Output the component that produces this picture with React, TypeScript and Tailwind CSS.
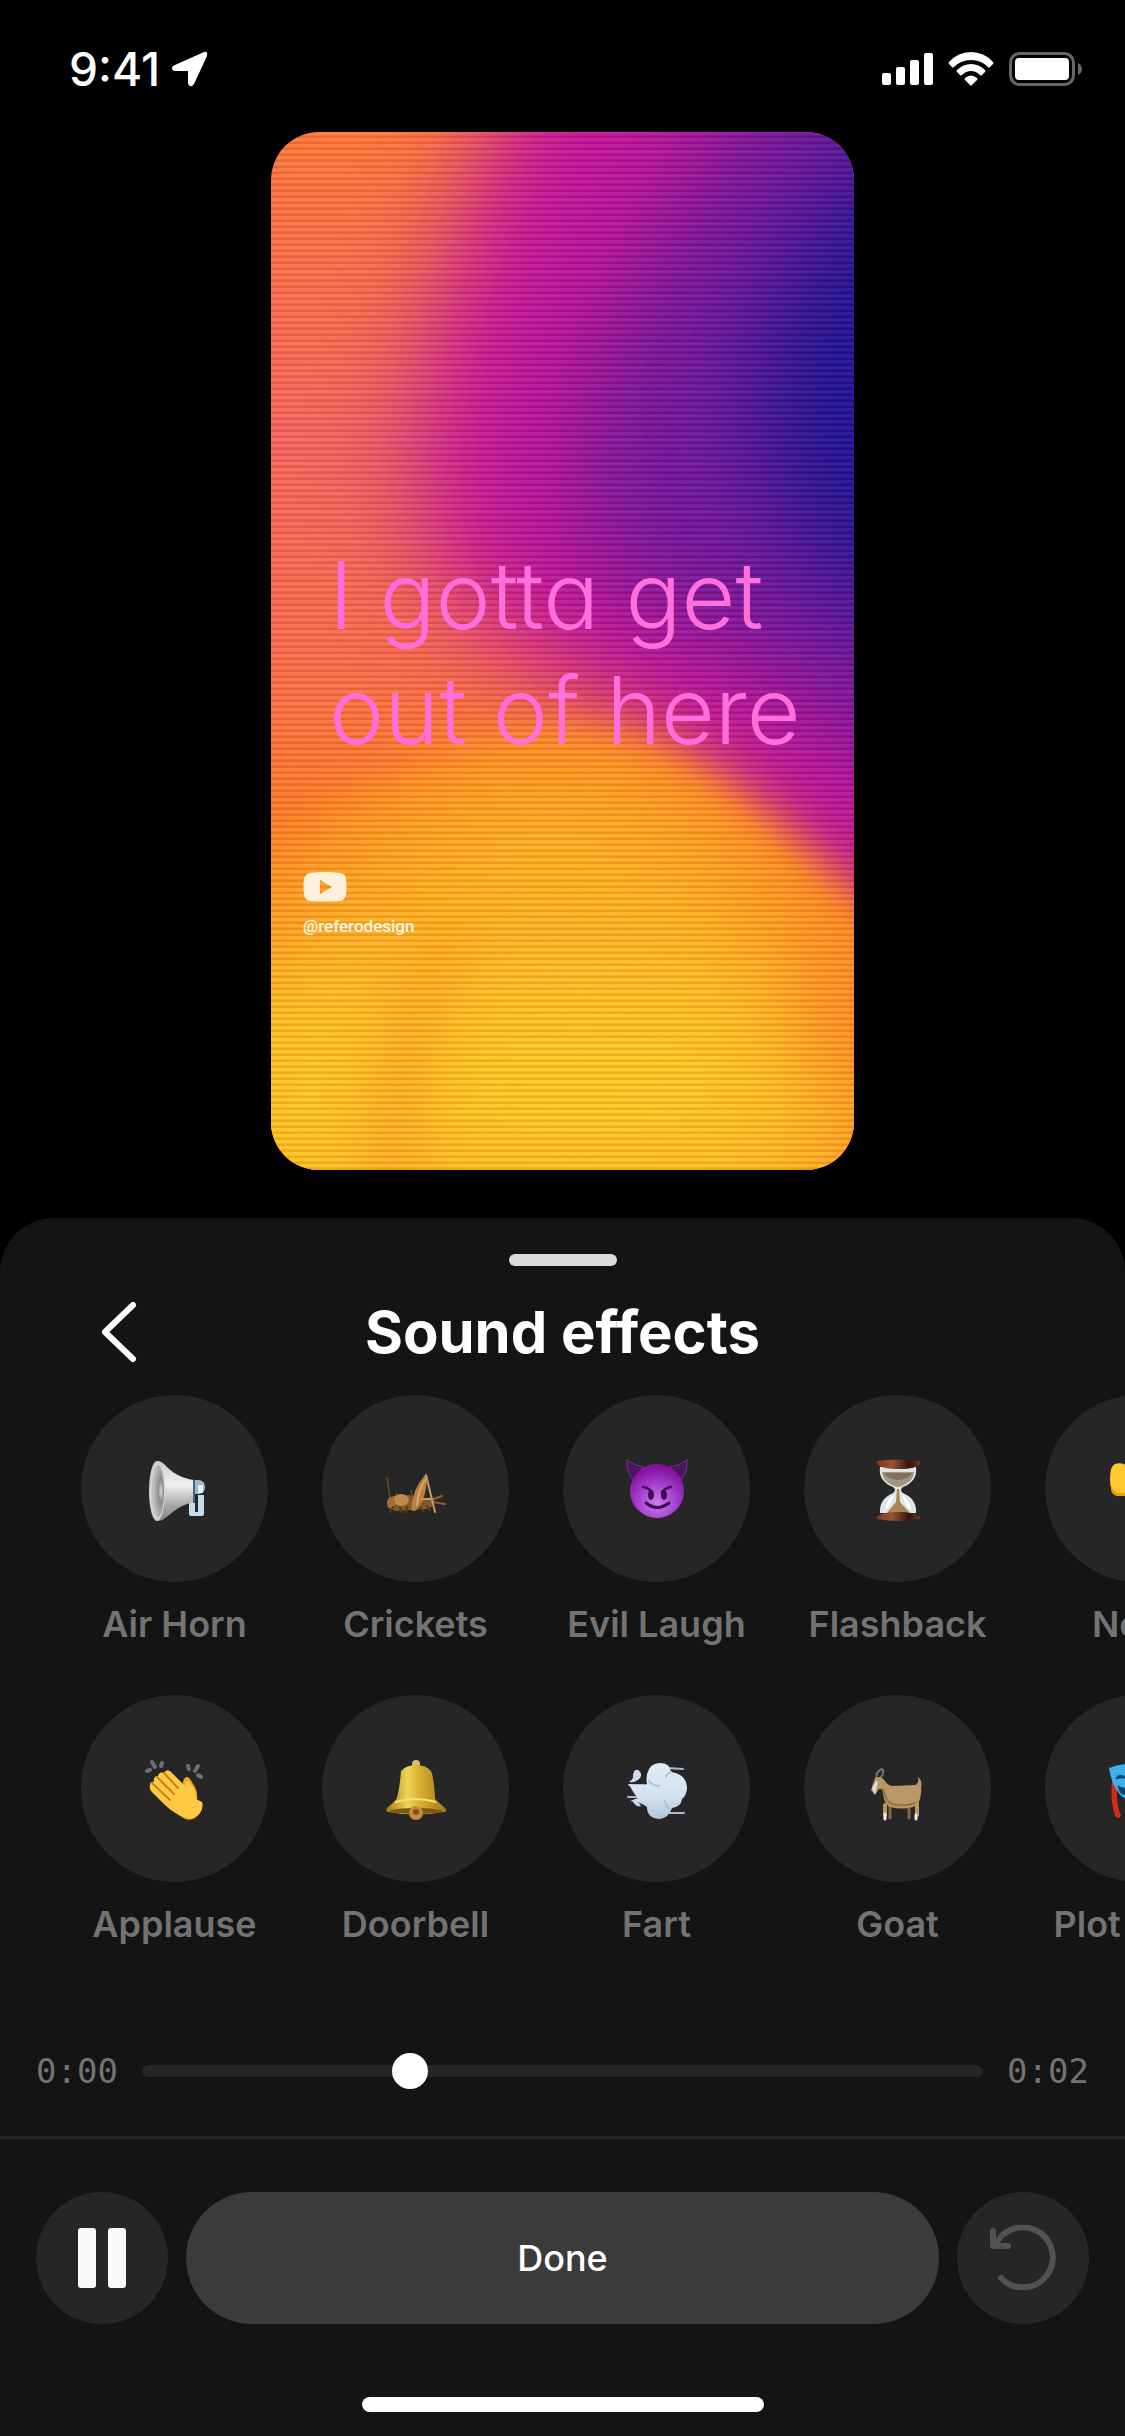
import { useState } from 'react'
import type { ReactNode } from 'react'

interface Sound {
  name: string
  icon: ReactNode
}

function AirHorn() {
  return (
    <svg viewBox="0 0 64 64" className="size-16" aria-hidden="true">
      <defs>
        <linearGradient id="hornBody" x1="0" y1="0" x2="0" y2="1">
          <stop offset="0" stopColor="#c9c9c9" />
          <stop offset="0.4" stopColor="#f1f1f1" />
          <stop offset="0.75" stopColor="#a5a5a5" />
          <stop offset="1" stopColor="#858585" />
        </linearGradient>
        <radialGradient id="hornMouth" cx="0.75" cy="0.5" r="0.6">
          <stop offset="0" stopColor="#d8d8d8" />
          <stop offset="0.35" stopColor="#8e8e8e" />
          <stop offset="1" stopColor="#bdbdbd" />
        </radialGradient>
      </defs>
      <path d="M46 40h6v15h3V38h6v19q0 2-2 2H48q-2 0-2-2z" fill="#c5dcec" />
      <path d="M51 23h5q6 1 6 7t-6 7h-5z" fill="#9db9cc" />
      <path d="M55 28h5v8h-5z" fill="#e6f2fa" />
      <path d="M15 4c8 0 10 15 36 19v22C29 50 24 64 15 64z" fill="url(#hornBody)" />
      <ellipse cx="14" cy="34" rx="8" ry="30" fill="#d2d2d2" />
      <ellipse cx="15" cy="34" rx="6" ry="26" fill="url(#hornMouth)" />
      <path d="M50 23h2v23h-2z" fill="#44637c" />
    </svg>
  )
}

function Cricket() {
  return (
    <svg viewBox="0 0 64 64" className="size-16" fill="none" strokeLinecap="round" aria-hidden="true">
      <path d="M3 21q2 10 3 21M12 36l3 8M27 34l2 10" stroke="#6b4a26" strokeWidth="1.5" />
      <path d="M33 44q14 0 28 3M42 45l16-6" stroke="#8a6235" strokeWidth="2" />
      <path d="M4 42q4-4 9-3l13-1 22 6q4 6-6 8l-30 2q-8-2-8-12z" fill="#81572b" />
      <ellipse cx="17" cy="43" rx="8" ry="6" fill="#c08a4c" />
      <ellipse cx="7" cy="46" rx="4" ry="6" fill="#a06f38" />
      <path d="M27 53q1-20 14-35 4 1 2 6-2 22-12 30z" fill="#b98141" />
      <path d="M33 48q1-14 8-25" stroke="#d9a868" strokeWidth="2" />
      <path d="M42 18l9 37M38 42h10" stroke="#c99a5d" strokeWidth="2" />
      <path d="M9 50l-3 5M16 50l1 5M23 50l-1 5M36 50l4 5M43 49l3 4" stroke="#5c3d1c" strokeWidth="2" />
    </svg>
  )
}

function Devil() {
  return (
    <svg viewBox="0 0 64 64" className="size-16" fill="none" strokeLinecap="round" aria-hidden="true">
      <defs>
        <radialGradient id="devilFace" cx="0.5" cy="0.72" r="0.65">
          <stop offset="0" stopColor="#cf7bea" />
          <stop offset="0.55" stopColor="#a53fd0" />
          <stop offset="1" stopColor="#86109f" />
        </radialGradient>
      </defs>
      <path d="M2 3q8 6 17 7L8 23Q1 15 2 3zM62 3q-8 6-17 7l11 13q7-8 6-20z" fill="#4d1462" stroke="#77308c" strokeWidth="1" />
      <circle cx="32" cy="34" r="27" fill="url(#devilFace)" />
      <path d="M18 30q4 0 9 5M46 30q-4 0-9 5" stroke="#3d0a55" strokeWidth="2.5" />
      <ellipse cx="26" cy="38" rx="3" ry="5" fill="#3d0a55" />
      <ellipse cx="39" cy="38" rx="3" ry="5" fill="#3d0a55" />
      <path d="M21 46q11 9 23 0" stroke="#3d0a55" strokeWidth="3" />
    </svg>
  )
}

function Hourglass() {
  return (
    <svg viewBox="0 0 64 64" className="size-16" aria-hidden="true">
      <defs>
        <linearGradient id="wood" x1="0" y1="0" x2="1" y2="0">
          <stop offset="0" stopColor="#7c3c20" />
          <stop offset="0.35" stopColor="#9a5332" />
          <stop offset="0.75" stopColor="#32130b" />
          <stop offset="1" stopColor="#75371f" />
        </linearGradient>
      </defs>
      <path d="M14 10h36q2 14-13 20-4 3 0 6 14 6 13 20H14q-1-14 13-20 4-3 0-6Q12 24 14 10z" fill="#dde5ea" />
      <path d="M16 15h32q0 9-12 14-4 2-8 0-12-5-12-14z" fill="#a69380" />
      <path d="M18 16h28q-3 6-14 7-11-1-14-7z" fill="#83705c" />
      <path d="M31 32h2l1 13 10 11H21l9-11z" fill="#a98553" />
      <path d="M19 54q0-10 9-16-3 10-9 16zM45 54q0-10-9-16 3 10 9 16z" fill="#fff" />
      <path d="M11 4q21-3 43 0v3q-3 5-21 5T11 7z" fill="url(#wood)" />
      <path d="M11 60q4-5 21-5t22 5v2q-21 4-43 0z" fill="url(#wood)" />
    </svg>
  )
}

function ThumbsDown() {
  return (
    <svg viewBox="0 0 64 64" className="size-16" aria-hidden="true">
      <path
        d="M8 7q6-2 13 2l20-3q8-1 9 5 6 3 3 9 5 4 1 9 2 6-5 8-5 2-13 1 2 8 1 17-1 7-6 6-4 0-5-8-2-8-8-17H9q-6-1-6-14T8 7z"
        fill="#ffc92e"
      />
      <path d="M4 28q2 6 7 8h8l2 3H10q-7-1-6-11z" fill="#e99f15" />
    </svg>
  )
}

function Clap() {
  return (
    <svg viewBox="0 0 64 64" className="size-16" fill="none" strokeLinecap="round" strokeLinejoin="round" aria-hidden="true">
      <path d="M4 14l3-1M9 5l3 5M19 6l-1 3M45 9l1 3M55 9l-3 5M58 20l-3-2" stroke="#66717a" strokeWidth="4" />
      <path d="M39 28l2-6q3-4 6 0l5 8q3 6 2 13l4 3q3 4-1 10l-5 5q-5 3-10 1l-8-5z" fill="#eda91f" />
      <path
        d="M7 28q0-4 4-3-1-6 4-6 1-5 6-3 3-5 7-1l14 14q0-6 3-5 8 8 8 18l6 3q2 5-3 12-6 6-12 4-13-4-22-13L8 34q-2-3-1-6z"
        fill="#ffca42"
      />
      <path d="M9 26l18 17M14 20l17 17M21 16l14 15" stroke="#c9811a" strokeWidth="2" />
    </svg>
  )
}

function Bell() {
  return (
    <svg viewBox="0 0 64 64" className="size-16" aria-hidden="true">
      <defs>
        <linearGradient id="brass" x1="0" y1="0" x2="1" y2="0">
          <stop offset="0" stopColor="#a87b14" />
          <stop offset="0.35" stopColor="#f0d356" />
          <stop offset="0.6" stopColor="#d3aa2c" />
          <stop offset="1" stopColor="#a8771a" />
        </linearGradient>
      </defs>
      <circle cx="32" cy="7" r="4" fill="#d8bd76" />
      <path d="M17 14q5-6 15-6t15 6q3 6 4 28l11 10q1 4-3 3-27 5-54 0-4 0-2-4l9-8q3-6 5-29z" fill="url(#brass)" />
      <ellipse cx="32" cy="54" rx="26" ry="3" fill="#7d5a10" />
      <path d="M11 45q21-6 41 0" fill="none" stroke="#f3df7d" strokeWidth="2" />
      <circle cx="32" cy="56" r="7" fill="#c48a43" />
      <circle cx="32" cy="55" r="3" fill="#8e4c22" />
    </svg>
  )
}

function Puff() {
  return (
    <svg viewBox="0 0 64 64" className="size-16" aria-hidden="true">
      <defs>
        <linearGradient id="cloud" x1="0" y1="0" x2="0" y2="1">
          <stop offset="0" stopColor="#e2ecf7" />
          <stop offset="0.6" stopColor="#d3e1f0" />
          <stop offset="1" stopColor="#b3c6dc" />
        </linearGradient>
      </defs>
      <path d="M42 11l16 1M42 56h17M3 40h14M4 28h14" stroke="#a9bace" strokeWidth="2" strokeLinecap="round" />
      <path
        d="M4 27q10 2 18 0-1-4 0-10 3-11 13-11t11 9q15 2 16 15 0 8-5 12-1 8-10 9-4 11-13 11-12-1-12-12-6-5-17-6l8-3q-5-5-9-14z"
        fill="url(#cloud)"
      />
      <path d="M24 24q4 5 10 5M44 52q-3-3-4-8M46 15q-4 1-5 5" stroke="#aec2d8" strokeWidth="2" fill="none" strokeLinecap="round" />
      <path d="M4 25q5-3 4-7 1-6 5-5 5 3 2 8-4 5-11 4zM7 43q6 0 9 6-5 2-9-6z" fill="#cfdbe8" />
    </svg>
  )
}

function Goat() {
  return (
    <svg viewBox="0 0 64 64" className="size-16" fill="none" strokeLinecap="round" aria-hidden="true">
      <path d="M24 46v15M43 46v15" stroke="#80664a" strokeWidth="3" />
      <path d="M10 22q0-8 6-10M13 22q5-4 4-9" stroke="#7d7164" strokeWidth="2" />
      <path
        d="M9 21q6-3 10 3 3 5 8 5l22-1q4-1 3-8 5 4 3 11 1 8-3 16l-5 3q-11 3-23 0-6-3-7-14-1-5-4-4l-4 6-4-5z"
        fill="#b99767"
      />
      <path d="M17 32q3 13 9 15 13 3 23-1" stroke="#92734a" strokeWidth="2" />
      <path d="M7 29l3-5 2 1-3 12-3-5z" fill="#e4dccd" />
      <path d="M19 48v10M51 46v12" stroke="#b99767" strokeWidth="4" />
      <path d="M19 57v5M50 58v4" stroke="#f1eadf" strokeWidth="3" />
    </svg>
  )
}

function Masks() {
  return (
    <svg viewBox="0 0 64 64" className="size-16" aria-hidden="true">
      <path d="M5 23q6 1 5 12t4 24q-3 4-6 0-5-16-3-36z" fill="#d52a16" />
      <path d="M2 11q16-6 34-4 3 28-14 37Q6 37 2 11z" fill="#40aee8" />
      <path d="M9 22q4-6 9-1M12 30q6 4 13-1-2 9-7 8t-6-7z" stroke="#10466f" strokeWidth="2" fill="#153c5d" />
      <path d="M27 23q17-3 34 4-3 25-18 34-16-10-16-38z" fill="#d65db1" />
    </svg>
  )
}

const sounds: Sound[] = [
  { name: 'Air Horn', icon: <AirHorn /> },
  { name: 'Applause', icon: <Clap /> },
  { name: 'Crickets', icon: <Cricket /> },
  { name: 'Doorbell', icon: <Bell /> },
  { name: 'Evil Laugh', icon: <Devil /> },
  { name: 'Fart', icon: <Puff /> },
  { name: 'Flashback', icon: <Hourglass /> },
  { name: 'Goat', icon: <Goat /> },
  { name: 'Nope', icon: <ThumbsDown /> },
  { name: 'Plot Twist', icon: <Masks /> },
]

function StatusBar() {
  return (
    <header className="flex h-[132px] items-start justify-between pt-[42px] pr-[42px] pl-[69px] text-white">
      <div className="flex items-center gap-3">
        <span className="text-[46px] leading-[54px] font-medium">9:41</span>
        <svg viewBox="0 0 36 36" className="size-9" aria-label="Location">
          <path d="M32 1q4-1 3 4L22 33q-2 3-4 2t-2-3V20H3q-3 0-3-3 0-2 3-3z" fill="currentColor" />
        </svg>
      </div>
      <div className="flex items-center gap-[15px] pt-[10px]">
        <svg viewBox="0 0 51 34" className="h-[34px] w-[51px]" fill="currentColor" aria-label="Signal">
          <rect x="0" y="21" width="9" height="12" rx="2" />
          <rect x="14" y="15" width="9" height="18" rx="2" />
          <rect x="28" y="8" width="9" height="25" rx="2" />
          <rect x="42" y="1" width="9" height="32" rx="2" />
        </svg>
        <svg viewBox="0 0 46 34" className="h-[34px] w-[46px]" fill="currentColor" aria-label="Wi-Fi">
          <path d="M1 10Q10 0 23 0t22 10q1 1 0 2l-3 3q-1 1-2 0-7-7-17-7T6 15q-1 1-2 0l-3-3q-1-1 0-2z" />
          <path d="M9 18q6-6 14-6t14 6q1 1 0 2l-3 3q-1 1-2 0-4-4-9-4t-9 4q-1 1-2 0l-3-3q-1-1 0-2z" />
          <path d="M17 26q6-5 12 0 1 1 0 2l-5 5q-1 1-2 0l-5-5q-1-1 0-2z" />
        </svg>
        <svg viewBox="0 0 74 34" className="h-[34px] w-[74px]" aria-label="Battery">
          <rect x="1.5" y="1.5" width="63" height="31" rx="9" fill="none" stroke="#666" strokeWidth="3" />
          <rect x="6" y="6" width="54" height="22" rx="4" fill="#fff" />
          <path d="M69 11q4 2 4 6t-4 6z" fill="#666" />
        </svg>
      </div>
    </header>
  )
}

function Backdrop() {
  return (
    <svg viewBox="0 0 583 1038" preserveAspectRatio="none" className="absolute inset-0 size-full" aria-hidden="true">
      <defs>
        <linearGradient id="coral" x1="0" y1="0" x2="0" y2="1">
          <stop offset="0" stopColor="#ff7636" />
          <stop offset="0.3" stopColor="#f4645a" />
          <stop offset="0.5" stopColor="#fa6a4a" />
          <stop offset="0.65" stopColor="#ff7a26" />
          <stop offset="1" stopColor="#ff9a1e" />
        </linearGradient>
        <filter id="soft" x="-400" y="-400" width="1500" height="1900" filterUnits="userSpaceOnUse" colorInterpolationFilters="sRGB">
          <feGaussianBlur stdDeviation="50" />
        </filter>
        <filter id="crisp" x="-400" y="-400" width="1500" height="1900" filterUnits="userSpaceOnUse" colorInterpolationFilters="sRGB">
          <feGaussianBlur stdDeviation="20" />
        </filter>
      </defs>
      <rect width="583" height="1038" fill="url(#coral)" />
      <path d="M280-200C210 40 160 160 150 310s60 180 130 230 170 100 350 320h300V-200z" fill="#c0109a" filter="url(#soft)" />
      <path d="M540-200C430 60 320 160 310 310s60 170 130 200 90 60 200 160h300V-200z" fill="#6c149a" filter="url(#soft)" />
      <path d="M700-80C580 40 490 130 490 260s70 200 180 270z" fill="#150f92" filter="url(#soft)" />
      <path d="M-150 860C0 700 160 605 290 600s190 75 420 290v400h-860z" fill="#ff8f1c" filter="url(#crisp)" />
      <path d="M-150 960C20 770 160 660 270 655s190 60 310 250v400h-730z" fill="#ffb31f" filter="url(#soft)" />
      <ellipse cx="310" cy="950" rx="240" ry="110" fill="#ffc81e" filter="url(#soft)" />
      <ellipse cx="40" cy="960" rx="90" ry="110" fill="#ffc81e" filter="url(#soft)" />
      <path d="M170 780q-80 90-80 290h60q0-150 60-290z" fill="#ffa41c" fillOpacity="0.6" filter="url(#crisp)" />
      <ellipse cx="590" cy="880" rx="50" ry="70" fill="#ff8420" filter="url(#soft)" />
    </svg>
  )
}

function VideoPreview() {
  return (
    <section
      aria-label="Video preview"
      className="relative mx-auto aspect-[583/1038] w-[583px] max-w-full overflow-hidden rounded-[48px]"
    >
      <Backdrop />
      <div className="absolute inset-0 bg-[repeating-linear-gradient(to_bottom,rgba(255,255,255,0.07)_0px,rgba(255,255,255,0.07)_3px,rgba(110,0,10,0.12)_4px,rgba(110,0,10,0.12)_6px)]" />
      <div className="relative flex flex-col items-start pt-[406px] pl-[58px]">
        <p className="text-[93px] leading-[115px] font-light whitespace-nowrap text-[#ff70dc] [font-feature-settings:'cv11']">
          I gotta get
          <br />
          out of here
        </p>
      </div>
      <div className="relative flex flex-col items-start gap-3 pt-[104px] pl-8 text-white/90">
        <svg viewBox="0 0 44 30" className="h-[30px] w-11" aria-label="YouTube">
          <path
            fillRule="evenodd"
            d="M7 1q15-2 30 0 6 1 6 6 1 8 0 16-1 5-6 6-15 1-30 0-5-1-6-6-1-8 0-16 1-5 6-6zM17 8v14l12-7z"
            fill="#fff0dc"
          />
        </svg>
        <span className="font-[Roboto,sans-serif] text-[17px] leading-6 font-medium">@referodesign</span>
      </div>
    </section>
  )
}

function SoundButton({ sound }: { sound: Sound }) {
  return (
    <button type="button" className="flex flex-col items-center gap-[18px]">
      <span className="flex size-[187px] items-center justify-center rounded-full bg-[#262626]">{sound.icon}</span>
      <span className="text-[36px] leading-[48px] font-semibold whitespace-nowrap text-[#737373]">{sound.name}</span>
    </button>
  )
}

export default function App() {
  const [position, setPosition] = useState(0.62)

  return (
    <div className="flex min-h-screen flex-col bg-black font-[Inter,sans-serif]">
      <StatusBar />
      <VideoPreview />

      <main className="mt-12 flex grow flex-col rounded-t-[54px] bg-[#141414] pt-9">
        <div className="mx-auto h-3 w-[108px] rounded-full bg-[#dbdbdb]" />

        <div className="mt-[30px] grid grid-cols-[1fr_auto_1fr] items-center px-[99px]">
          <button type="button" aria-label="Back" className="w-fit text-white">
            <svg viewBox="0 0 39 66" className="h-[66px] w-[39px]" fill="none">
              <path d="M34 6L6 33l28 27" stroke="currentColor" strokeWidth="6" strokeLinecap="round" strokeLinejoin="round" />
            </svg>
          </button>
          <h1 className="text-[58px] leading-[72px] font-bold text-white">Sound effects</h1>
        </div>

        <div className="mt-[27px] grid auto-cols-[187px] grid-flow-col grid-rows-2 gap-x-[54px] gap-y-[47px] overflow-x-auto pl-[81px] [scrollbar-width:none]">
          {sounds.map((sound) => (
            <SoundButton key={sound.name} sound={sound} />
          ))}
        </div>

        <div className="mt-[99px] flex items-center gap-6 px-9 text-[#737373]">
          <span className="font-['DejaVu_Sans_Mono',monospace] text-[34px] leading-[48px]">0:00</span>
          <input
            type="range"
            aria-label="Playback position"
            min={0}
            max={2}
            step={0.01}
            value={position}
            onChange={(e) => setPosition(Number(e.target.value))}
            className="h-3 min-w-0 grow appearance-none rounded-full bg-[#262626] [&::-webkit-slider-thumb]:size-9 [&::-webkit-slider-thumb]:appearance-none [&::-webkit-slider-thumb]:rounded-full [&::-webkit-slider-thumb]:bg-white"
          />
          <span className="font-['DejaVu_Sans_Mono',monospace] text-[34px] leading-[48px]">0:02</span>
        </div>

        <div className="mt-[41px] flex gap-[18px] border-t-[3px] border-[#262626] px-9 pt-[53px]">
          <button
            type="button"
            aria-label="Pause"
            className="flex size-[132px] shrink-0 items-center justify-center rounded-full bg-[#262626]"
          >
            <svg viewBox="0 0 48 60" className="h-[60px] w-12" fill="#fafafa">
              <rect width="18" height="60" rx="3" />
              <rect x="30" width="18" height="60" rx="3" />
            </svg>
          </button>
          <button type="button" className="h-[132px] grow rounded-full bg-[#3b3b3b] text-[36px] font-medium text-white">
            Done
          </button>
          <button
            type="button"
            aria-label="Undo"
            className="flex size-[132px] shrink-0 items-center justify-center rounded-full bg-[#262626]"
          >
            <svg viewBox="0 0 66 66" className="size-[66px]" fill="none" stroke="#525252" strokeWidth="6" strokeLinecap="round" strokeLinejoin="round">
              <path d="M11 53a30 30 0 1 0-6-32M3 6v15h15" />
            </svg>
          </button>
        </div>

        <div className="mx-auto mt-[73px] mb-6 h-[15px] w-[402px] rounded-full bg-white" />
      </main>
    </div>
  )
}
